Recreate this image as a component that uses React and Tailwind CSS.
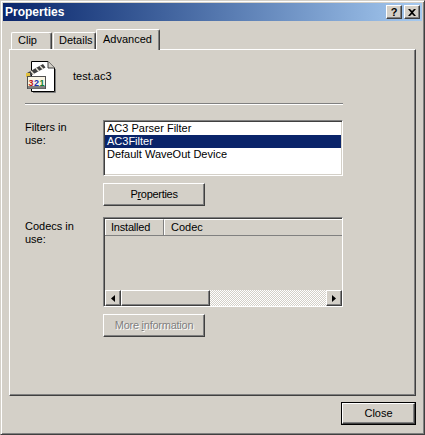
import React from "react";

function Btn({ className = "", children }) {
  return (
    <div className={"flex items-center justify-center bg-[#d4d0c8] border border-t-white border-l-white border-r-[#404040] border-b-[#404040] shadow-[inset_-1px_-1px_0_#808080] " + className}>
      {children}
    </div>
  );
}

function FileIcon() {
  const f = "'Liberation Sans',sans-serif";
  return (
    <svg width="32" height="33" viewBox="0 0 32 33" className="block">
      <path d="M5.5 1.5H22L28.5 8V31.5H5.5Z" fill="#fff" stroke="#000" />
      <path d="M22 1.5V8H28.5" fill="#d4d0c8" stroke="#404040" />
      <path d="M29.5 9V32.5H7" fill="none" stroke="#808080" />
      <path d="M1 13L17 4L19.5 7.5L3 16.5Z" fill="#404040" />
      <path d="M5 11L8 14.5M10 8L13 11.5M14 6L17 9" stroke="#e8e4d8" strokeWidth="1.4" />
      <rect x="0" y="13" width="4" height="4" fill="#e0c040" />
      <rect x="1.5" y="16.5" width="18" height="12" fill="#f8f4e4" stroke="#505050" />
      <rect x="2" y="26" width="17" height="2.5" fill="#808080" />
      <text x="2.5" y="25.5" fontSize="9" fontWeight="700" fontFamily={f} fill="#c01818">3</text>
      <text x="8" y="25.5" fontSize="9" fontWeight="700" fontFamily={f} fill="#1830b0">2</text>
      <text x="13.5" y="25.5" fontSize="9" fontWeight="700" fontFamily={f} fill="#108030">1</text>
    </svg>
  );
}

function Tab({ label, active, className = "" }) {
  return (
    <div
      className={
        "flex items-center bg-[#d4d0c8] border-t border-l border-r border-t-white border-l-white border-r-[#404040] rounded-t-[2px] shadow-[inset_-1px_0_0_#808080] " +
        (active ? "relative z-10 -mb-px h-[21px] pb-[1px] " : "h-[17px] pb-[2px] ") +
        className
      }
    >
      {label}
    </div>
  );
}

export default function App() {
  return (
    <div className="w-[425px] h-[435px] flex flex-col bg-[#d4d0c8] border border-t-[#d4d0c8] border-l-[#d4d0c8] border-r-[#404040] border-b-[#404040] shadow-[inset_1px_1px_0_#fff,inset_-1px_-1px_0_#808080] text-[11px] leading-[13px] text-black font-['Liberation_Sans',Arial,sans-serif] overflow-hidden">
      <div className="ml-[2px] mr-[2px] mt-[2px] h-[18px] shrink-0 flex items-center bg-gradient-to-r from-[#0a246a] to-[#a6caf0] pl-[2px] pr-[2px]">
        <span className="font-bold text-white text-[12px]">Properties</span>
        <div className="ml-auto flex">
          <Btn className="w-[16px] h-[14px] font-bold text-[11px] mr-[2px]">?</Btn>
          <Btn className="w-[16px] h-[14px]">
            <svg width="8" height="7" viewBox="0 0 8 7"><path d="M0 0H2L4 2L6 0H8L5 3.5L8 7H6L4 5L2 7H0L3 3.5Z" fill="#000" /></svg>
          </Btn>
        </div>
      </div>

      <div className="flex items-end ml-[10px] mt-[8px] h-[20px] shrink-0">
        <Tab label="Clip" className="w-[41px] mr-px pl-[6px]" />
        <Tab label="Details" className="w-[43px] pl-[5px]" />
        <Tab label="Advanced" active className="w-[64px] pl-[6px]" />
      </div>

      <div className="ml-[8px] mr-[8px] h-[347px] shrink-0 flex flex-col border border-t-white border-l-white border-r-[#404040] border-b-[#404040] shadow-[inset_-1px_-1px_0_#808080] pl-[15px] pr-[71px]">
        <div className="flex items-center h-[33px] mt-[10px] ml-px">
          <FileIcon />
          <span className="ml-[15px]">test.ac3</span>
        </div>
        <div className="mt-[10px] h-[2px] w-[318px] bg-[#808080] border-b border-b-white shrink-0" />

        <div className="flex mt-[15px]">
          <div className="w-[78px] pt-[1px]">Filters in<br />use:</div>
          <div className="flex flex-col">
            <div className="w-[240px] h-[56px] bg-white border border-t-[#808080] border-l-[#808080] border-r-white border-b-white shadow-[inset_1px_1px_0_#404040,inset_-1px_-1px_0_#d4d0c8] p-px pt-[1px]">
              <div className="h-[13px] pl-[2px]">AC3 Parser Filter</div>
              <div className="h-[13px] pl-[2px] bg-[#0a246a] text-white">AC3Filter</div>
              <div className="h-[13px] pl-[2px]">Default WaveOut Device</div>
            </div>
            <Btn className="w-[102px] h-[23px] mt-[7px]"><span className="tracking-[-0.3px]">P<u>r</u>operties</span></Btn>
          </div>
        </div>

        <div className="flex mt-[11px]">
          <div className="w-[78px] pt-[3px]">Codecs in<br />use:</div>
          <div className="flex flex-col">
            <div className="w-[240px] h-[90px] flex flex-col bg-[#d4d0c8] border border-t-[#808080] border-l-[#808080] border-r-white border-b-white shadow-[inset_1px_1px_0_#404040] pl-px pt-px">
              <div className="flex h-[17px] shrink-0 border-b border-b-[#808080]">
                <div className="w-[59px] h-full flex items-center pl-[5px] tracking-[-0.2px] border-t border-l border-t-white border-l-white border-r border-r-[#808080]">Installed</div>
                <div className="flex-1 h-full flex items-center pl-[6px] border-t border-l border-t-white border-l-white">Codec</div>
              </div>
              <div className="flex-1" />
              <div className="flex h-[16px] shrink-0 bg-[repeating-conic-gradient(#fff_0_25%,#d4d0c8_0_50%)] bg-[length:2px_2px]">
                <Btn className="w-[16px] h-full">
                  <svg width="4" height="7" viewBox="0 0 4 7"><path d="M4 0V7L0 3.5Z" fill="#000" /></svg>
                </Btn>
                <Btn className="w-[89px] h-full" />
                <Btn className="w-[16px] h-full ml-auto">
                  <svg width="4" height="7" viewBox="0 0 4 7"><path d="M0 0V7L4 3.5Z" fill="#000" /></svg>
                </Btn>
              </div>
            </div>
            <Btn className="w-[102px] h-[23px] mt-[7px] text-[#808080] [text-shadow:1px_1px_0_#fff]"><span className="tracking-[-0.25px]">More <u>i</u>nformation</span></Btn>
          </div>
        </div>
      </div>

      <div className="flex justify-end mt-[6px] mr-[8px]">
        <div className="border border-black">
          <Btn className="w-[73px] h-[21px]">Close</Btn>
        </div>
      </div>
    </div>
  );
}
